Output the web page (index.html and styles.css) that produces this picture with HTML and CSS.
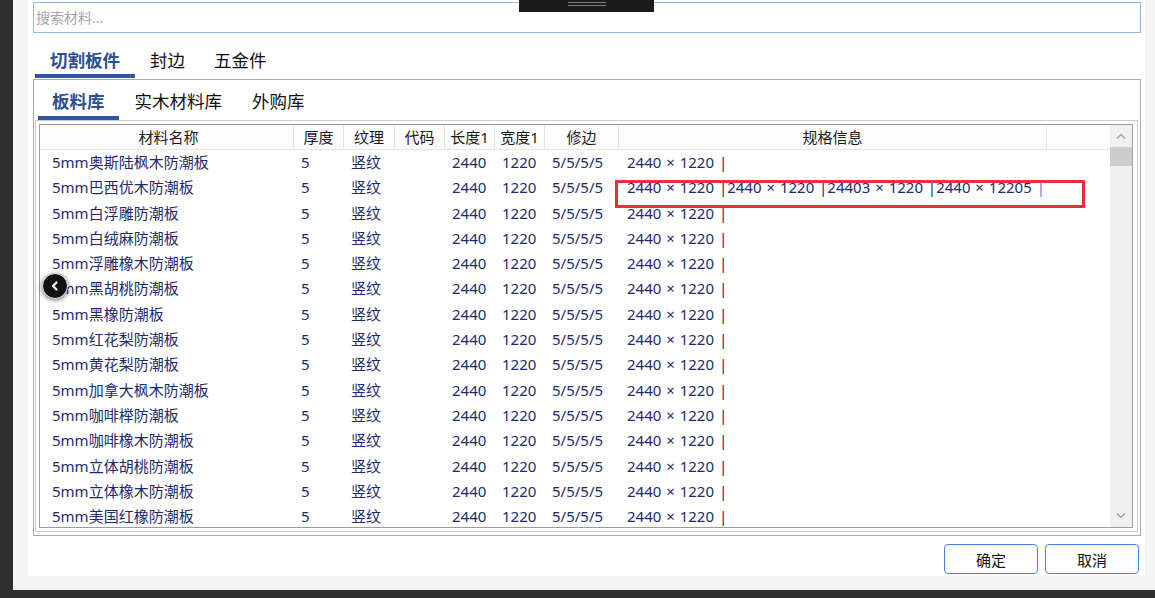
FILE: index.html
```html
<!DOCTYPE html>
<html lang="zh-CN">
<head>
<meta charset="utf-8">
<title>材料选择</title>
<link rel="stylesheet" href="styles.css">
</head>
<body>
<div class="window">
  <div class="dialog">
    <input class="search" type="text" placeholder="搜索材料...">
    <div class="tabs">
      <div class="tab active">切割板件</div>
      <div class="tab">封边</div>
      <div class="tab">五金件</div>
    </div>
    <div class="panel">
      <div class="subtabs">
        <div class="subtab active">板料库</div>
        <div class="subtab">实木材料库</div>
        <div class="subtab">外购库</div>
      </div>
      <div class="innerbox">
        <div class="table">
          <div class="table-main">
            <div class="row head">
              <div class="c"></div>
              <div class="c">材料名称</div>
              <div class="c">厚度</div>
              <div class="c">纹理</div>
              <div class="c">代码</div>
              <div class="c">长度1</div>
              <div class="c">宽度1</div>
              <div class="c">修边</div>
              <div class="c">规格信息</div>
              <div class="c last"></div>
            </div>
            <div class="rows">
              <div class="row"><div class="c"></div><div class="c">5mm奥斯陆枫木防潮板</div><div class="c">5</div><div class="c">竖纹</div><div class="c"></div><div class="c">2440</div><div class="c">1220</div><div class="c">5/5/5/5</div><div class="c spec">2440 × 1220 |</div><div class="c"></div></div>
              <div class="row"><div class="c"></div><div class="c">5mm巴西优木防潮板</div><div class="c">5</div><div class="c">竖纹</div><div class="c"></div><div class="c">2440</div><div class="c">1220</div><div class="c">5/5/5/5</div><div class="c spec">2440 × 1220 |2440 × 1220 |24403 × 1220 |2440 × 12205 <span class="caret">|</span></div><div class="c"></div></div>
              <div class="row"><div class="c"></div><div class="c">5mm白浮雕防潮板</div><div class="c">5</div><div class="c">竖纹</div><div class="c"></div><div class="c">2440</div><div class="c">1220</div><div class="c">5/5/5/5</div><div class="c spec">2440 × 1220 |</div><div class="c"></div></div>
              <div class="row"><div class="c"></div><div class="c">5mm白绒麻防潮板</div><div class="c">5</div><div class="c">竖纹</div><div class="c"></div><div class="c">2440</div><div class="c">1220</div><div class="c">5/5/5/5</div><div class="c spec">2440 × 1220 |</div><div class="c"></div></div>
              <div class="row"><div class="c"></div><div class="c">5mm浮雕橡木防潮板</div><div class="c">5</div><div class="c">竖纹</div><div class="c"></div><div class="c">2440</div><div class="c">1220</div><div class="c">5/5/5/5</div><div class="c spec">2440 × 1220 |</div><div class="c"></div></div>
              <div class="row"><div class="c"></div><div class="c">5mm黑胡桃防潮板</div><div class="c">5</div><div class="c">竖纹</div><div class="c"></div><div class="c">2440</div><div class="c">1220</div><div class="c">5/5/5/5</div><div class="c spec">2440 × 1220 |</div><div class="c"></div></div>
              <div class="row"><div class="c"></div><div class="c">5mm黑橡防潮板</div><div class="c">5</div><div class="c">竖纹</div><div class="c"></div><div class="c">2440</div><div class="c">1220</div><div class="c">5/5/5/5</div><div class="c spec">2440 × 1220 |</div><div class="c"></div></div>
              <div class="row"><div class="c"></div><div class="c">5mm红花梨防潮板</div><div class="c">5</div><div class="c">竖纹</div><div class="c"></div><div class="c">2440</div><div class="c">1220</div><div class="c">5/5/5/5</div><div class="c spec">2440 × 1220 |</div><div class="c"></div></div>
              <div class="row"><div class="c"></div><div class="c">5mm黄花梨防潮板</div><div class="c">5</div><div class="c">竖纹</div><div class="c"></div><div class="c">2440</div><div class="c">1220</div><div class="c">5/5/5/5</div><div class="c spec">2440 × 1220 |</div><div class="c"></div></div>
              <div class="row"><div class="c"></div><div class="c">5mm加拿大枫木防潮板</div><div class="c">5</div><div class="c">竖纹</div><div class="c"></div><div class="c">2440</div><div class="c">1220</div><div class="c">5/5/5/5</div><div class="c spec">2440 × 1220 |</div><div class="c"></div></div>
              <div class="row"><div class="c"></div><div class="c">5mm咖啡榉防潮板</div><div class="c">5</div><div class="c">竖纹</div><div class="c"></div><div class="c">2440</div><div class="c">1220</div><div class="c">5/5/5/5</div><div class="c spec">2440 × 1220 |</div><div class="c"></div></div>
              <div class="row"><div class="c"></div><div class="c">5mm咖啡橡木防潮板</div><div class="c">5</div><div class="c">竖纹</div><div class="c"></div><div class="c">2440</div><div class="c">1220</div><div class="c">5/5/5/5</div><div class="c spec">2440 × 1220 |</div><div class="c"></div></div>
              <div class="row"><div class="c"></div><div class="c">5mm立体胡桃防潮板</div><div class="c">5</div><div class="c">竖纹</div><div class="c"></div><div class="c">2440</div><div class="c">1220</div><div class="c">5/5/5/5</div><div class="c spec">2440 × 1220 |</div><div class="c"></div></div>
              <div class="row"><div class="c"></div><div class="c">5mm立体橡木防潮板</div><div class="c">5</div><div class="c">竖纹</div><div class="c"></div><div class="c">2440</div><div class="c">1220</div><div class="c">5/5/5/5</div><div class="c spec">2440 × 1220 |</div><div class="c"></div></div>
              <div class="row"><div class="c"></div><div class="c">5mm美国红橡防潮板</div><div class="c">5</div><div class="c">竖纹</div><div class="c"></div><div class="c">2440</div><div class="c">1220</div><div class="c">5/5/5/5</div><div class="c spec">2440 × 1220 |</div><div class="c"></div></div>
            </div>
          </div>
          <div class="scrollbar">
            <div class="sb-btn">
              <svg width="10" height="6" viewBox="0 0 10 6"><path d="M1 5.5 L5 1.5 L9 5.5" fill="none" stroke="#9a9a9a" stroke-width="1.2"/></svg>
            </div>
            <div class="sb-thumb"></div>
            <div class="sb-track"></div>
            <div class="sb-btn">
              <svg width="10" height="6" viewBox="0 0 10 6"><path d="M1 0.5 L5 4.5 L9 0.5" fill="none" stroke="#9a9a9a" stroke-width="1.2"/></svg>
            </div>
          </div>
        </div>
      </div>
    </div>
    <div class="footer">
      <button class="btn">确定</button>
      <button class="btn">取消</button>
    </div>
  </div>
</div>

<div class="handle"><span></span><span></span></div>
<div class="mark"></div>
<div class="back-btn">
  <svg width="12" height="12" viewBox="0 0 12 12"><path d="M7.5 2.5 L4 6 L7.5 9.5" fill="none" stroke="#fff" stroke-width="2.2" stroke-linecap="round" stroke-linejoin="round"/></svg>
</div>
</body>
</html>
```

FILE: styles.css
```css
* { box-sizing: border-box; }

html, body {
  margin: 0;
  padding: 0;
}

body {
  width: 1155px;
  height: 598px;
  overflow: hidden;
  position: relative;
  background: #2e2e2e;
  font-family: "Noto Sans", "Noto Sans CJK SC", sans-serif;
  color: #111;
}

.window {
  margin-left: 13px;
  height: 590px;
  background: #f5f5f5;
  padding: 0 10px 14px 15px;
}

.dialog {
  background: #fff;
  height: 576px;
  padding: 2px 4px 0 5px;
  display: flex;
  flex-direction: column;
}

.search {
  height: 31px;
  width: 100%;
  border: 1px solid #8fb9ea;
  outline: none;
  padding: 0 2px;
  font-family: "Noto Sans", "Noto Sans CJK SC", sans-serif;
  font-size: 14px;
  color: #333;
  background: #fff;
}

.search::placeholder {
  color: #a6a6a6;
}

.tabs {
  display: flex;
  padding-left: 2px;
  height: 45px;
}

.tab {
  font-size: 17.5px;
  line-height: 24px;
  padding: 15px 15px 2px 15px;
  border-bottom: 4px solid transparent;
  color: #111;
}

.tab.active {
  font-weight: bold;
  color: #2c4e93;
  border-bottom-color: #3156a3;
}

.tab + .tab {
  padding-right: 14px;
}

.panel {
  margin-top: 1px;
  border: 1px solid #a9a9a9;
  padding-bottom: 3px;
}

.subtabs {
  display: flex;
  padding-left: 4px;
  height: 40px;
}

.subtab {
  font-size: 17.5px;
  line-height: 24px;
  padding: 9px 16px 3px 14px;
  border-bottom: 4px solid transparent;
  color: #111;
}

.subtab.active {
  font-weight: bold;
  color: #2c4e93;
  border-bottom-color: #3156a3;
  padding-right: 14px;
}

.subtab.active + .subtab {
  padding-left: 16px;
}

.innerbox {
  margin: 0 2px 0 1px;
  border: 1px solid #c9c9c9;
  padding: 3px 4px 3px 3px;
}

.table {
  height: 404px;
  border: 1px solid #9c9c9c;
  display: flex;
  overflow: hidden;
}

.table-main {
  flex: 1;
  min-width: 0;
  overflow: hidden;
  display: flex;
  flex-direction: column;
}

.row {
  display: grid;
  grid-template-columns: 4px 250px 50px 51px 50px 50px 50px 74px 428px 1fr;
  height: 25.3px;
  flex: none;
  font-size: 15px;
  line-height: 25px;
  white-space: nowrap;
}

.row.head {
  height: 25px;
  border-bottom: 1px solid #e6e6e6;
  background: linear-gradient(#ffffff, #fbfbfb);
  color: #1a1a1a;
}

.row.head .c {
  text-align: center;
  border-right: 1px solid #e3e3e3;
  line-height: 24px;
  padding: 0;
}

.row.head .c:first-child,
.row.head .c.last {
  border-right: none;
}

.rows .row {
  color: #1d2b6c;
}

.rows .c {
  padding-left: 7px;
  overflow: visible;
}

.rows .c:first-child {
  padding: 0;
}

.rows .c:nth-child(2) {
  padding-left: 8px;
}

.rows .c.spec {
  padding-left: 8px;
  word-spacing: 1px;
}

.caret {
  color: #4a84d6;
}

.scrollbar {
  width: 22px;
  flex: none;
  background: #f0f0f0;
  display: flex;
  flex-direction: column;
}

.sb-btn {
  height: 22px;
  display: flex;
  align-items: center;
  justify-content: center;
}

.sb-thumb {
  height: 19px;
  background: #cdcdcd;
}

.sb-track {
  flex: 1;
}

.footer {
  display: flex;
  justify-content: flex-end;
  gap: 7px;
  margin-top: 8px;
  padding-right: 2px;
}

.btn {
  width: 94px;
  height: 30px;
  border: 1px solid #4583e4;
  border-radius: 4px;
  background: #fff;
  font-family: "Noto Sans", "Noto Sans CJK SC", sans-serif;
  font-size: 15px;
  color: #111;
  padding: 0;
}

/* overlays */
.handle {
  position: absolute;
  left: 519px;
  top: 0;
  width: 135px;
  height: 12px;
  background: #1c1c1c;
  display: flex;
  flex-direction: column;
  align-items: center;
  padding-top: 2px;
  gap: 2px;
}

.handle span {
  display: block;
  width: 38px;
  height: 1px;
  background: #7c7c7c;
}

.mark {
  position: absolute;
  left: 615px;
  top: 180px;
  width: 470px;
  height: 28px;
  border: 3px solid #ee2d3a;
}

.back-btn {
  position: absolute;
  left: 42px;
  top: 273px;
  width: 26px;
  height: 26px;
  border-radius: 50%;
  background: #121212;
  border: 1.5px solid #ececec;
  box-shadow: 0 1px 4px rgba(0, 0, 0, 0.6);
  display: flex;
  align-items: center;
  justify-content: center;
}
```
